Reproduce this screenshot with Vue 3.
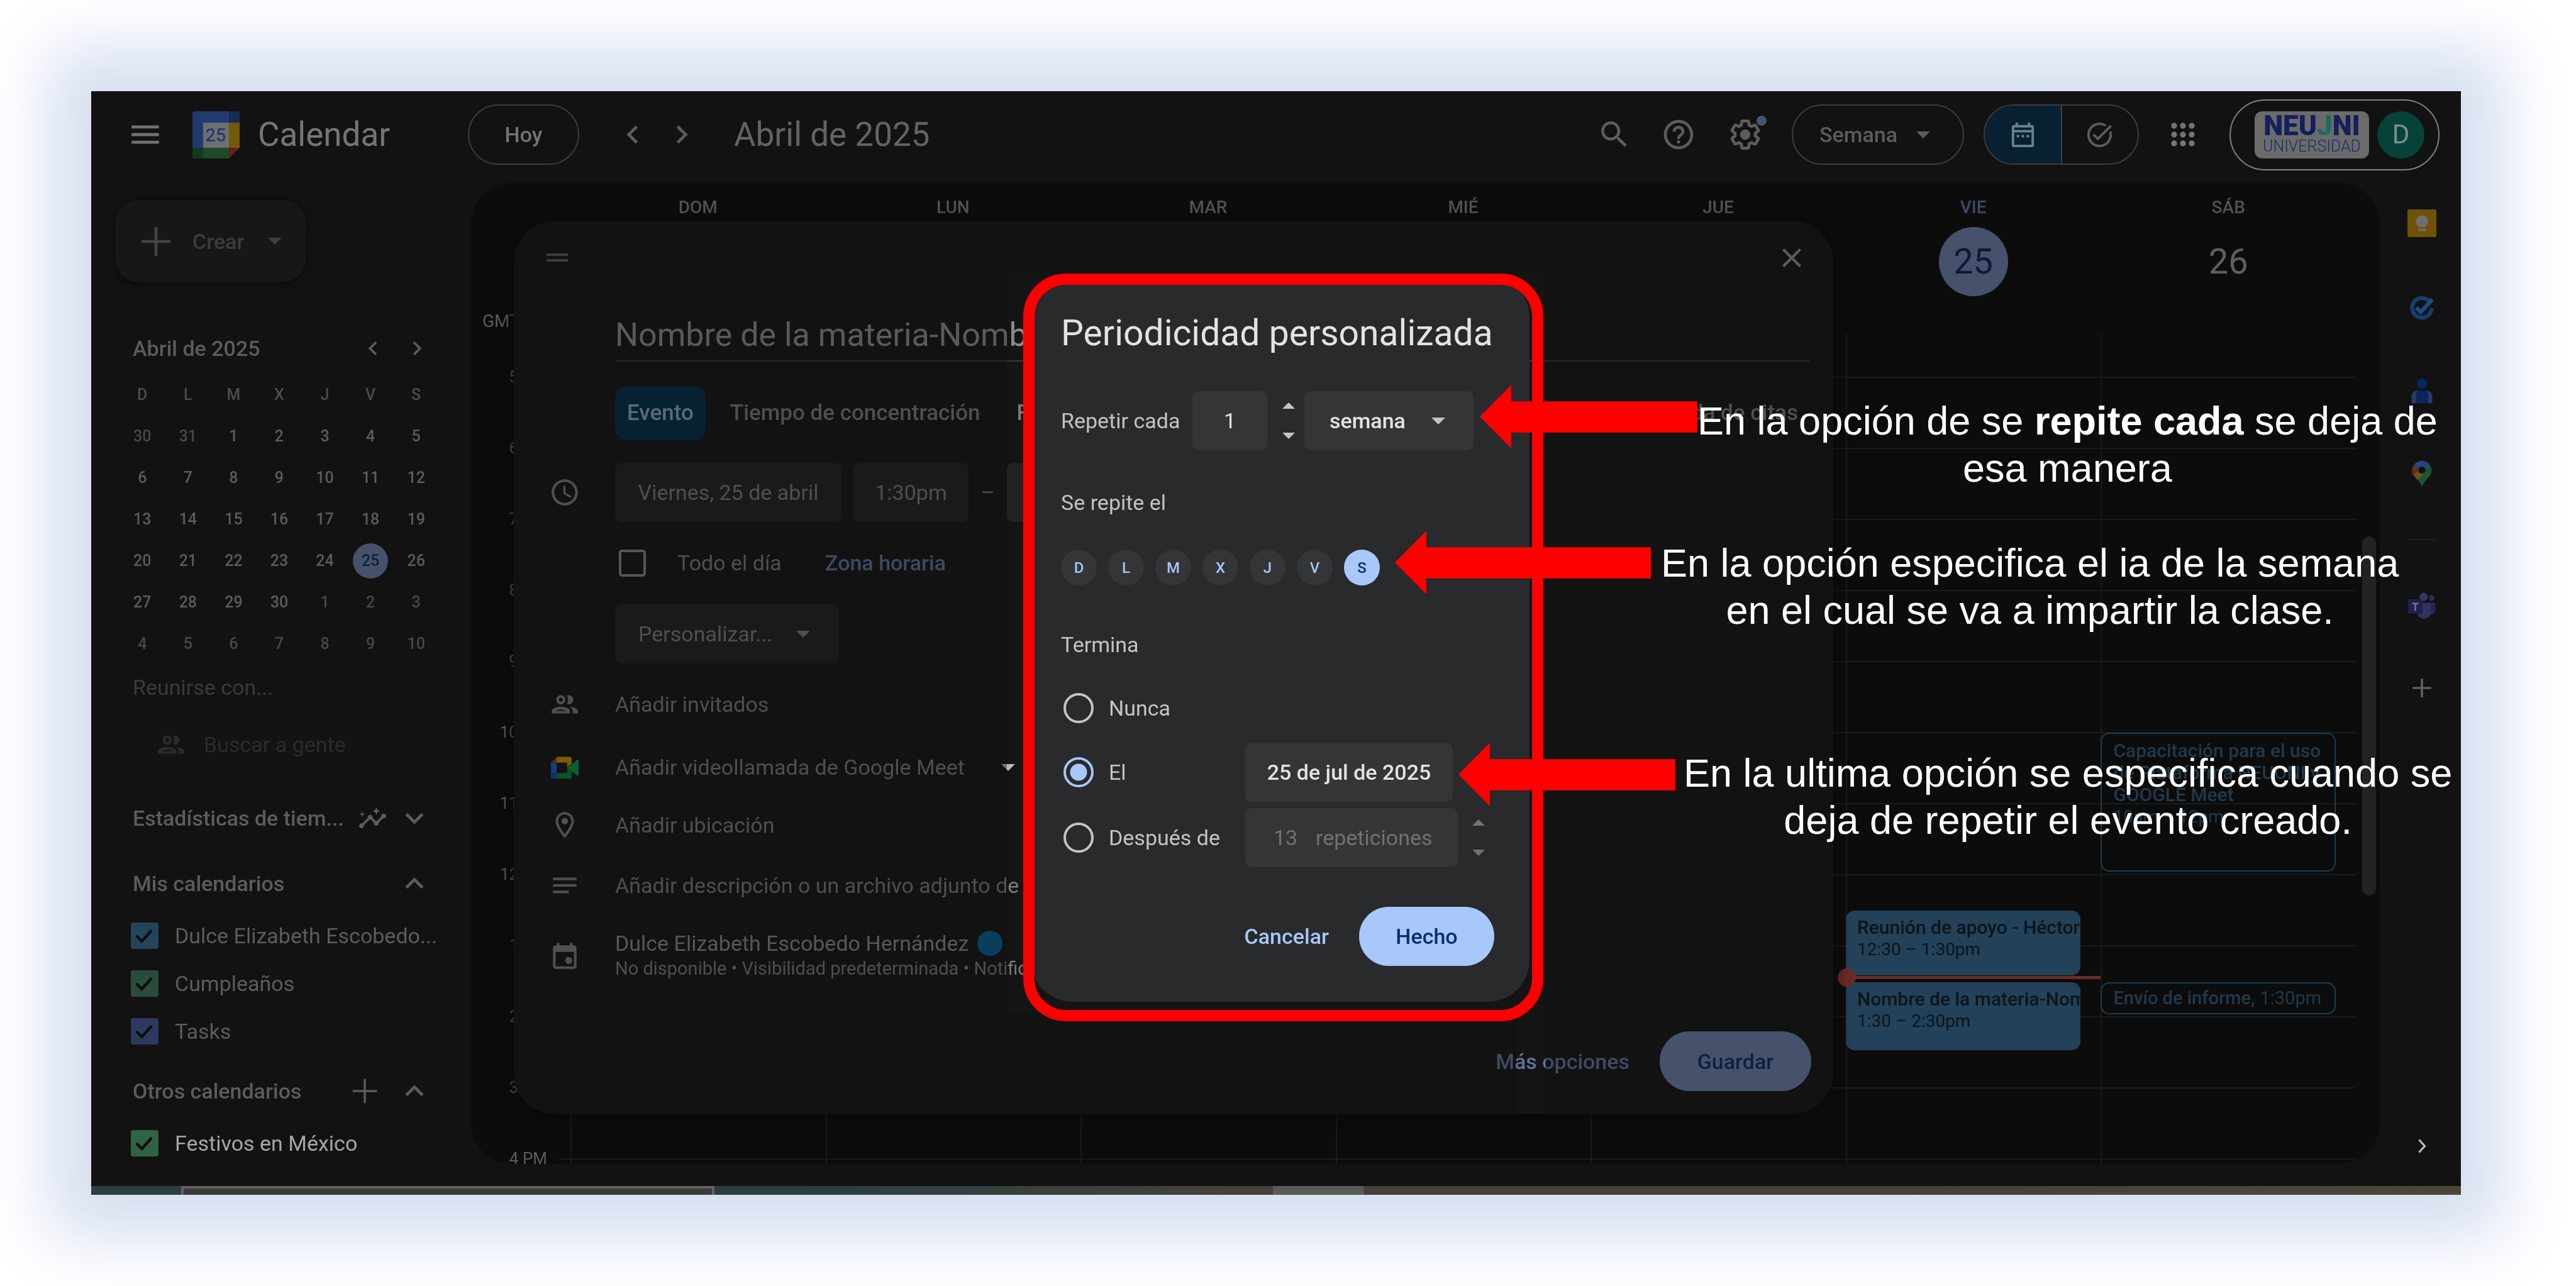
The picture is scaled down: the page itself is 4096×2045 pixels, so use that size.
<script setup>
import { ref } from 'vue'

const weekdays = ['D', 'L', 'M', 'X', 'J', 'V', 'S']
const miniWeeks = [
  [30, 31, 1, 2, 3, 4, 5],
  [6, 7, 8, 9, 10, 11, 12],
  [13, 14, 15, 16, 17, 18, 19],
  [20, 21, 22, 23, 24, 25, 26],
  [27, 28, 29, 30, 1, 2, 3],
  [4, 5, 6, 7, 8, 9, 10],
]
const isOtherMonth = (row, day) => (row === 0 && day > 20) || (row === 4 && day < 10) || row === 5
const isToday = (row, day) => row === 3 && day === 25

const myCalendars = ref([
  { name: 'Dulce Elizabeth Escobedo...', color: '#23455c', on: true },
  { name: 'Cumpleaños', color: '#284d3b', on: true },
  { name: 'Tasks', color: '#2c3a5f', on: true },
])
const otherCalendars = ref([{ name: 'Festivos en México', color: '#2f6343', on: true }])

const hours = ['5 AM', '6 AM', '7 AM', '8 AM', '9 AM', '10 AM', '11 AM', '12 PM', '1 PM', '2 PM', '3 PM', '4 PM']
const days = [
  { name: 'DOM', date: 20 },
  { name: 'LUN', date: 21 },
  { name: 'MAR', date: 22 },
  { name: 'MIÉ', date: 23 },
  { name: 'JUE', date: 24 },
  {
    name: 'VIE',
    date: 25,
    today: true,
    events: [
      { title: ['Reunión de apoyo - Héctor'], time: '12:30 – 1:30pm', top: 917, height: 103 },
      { title: ['Nombre de la materia-Nombre'], time: '1:30 – 2:30pm', top: 1031, height: 108 },
    ],
  },
  {
    name: 'SÁB',
    date: 26,
    events: [
      { title: ['Capacitación para el uso', 'de Plataforma NEUONI y', 'GOOGLE Meet'], time: '10am – 12pm', top: 634, height: 221, outline: true },
      { title: ['Envío de informe,'], time: '1:30pm', top: 1031, height: 51, outline: true, inline: true },
    ],
  },
]

const title = ref('Nombre de la materia-Nombre del docente')
const allDay = ref(false)
const repeatDay = ref('S')
const ends = ref('el')
</script>

<template>
  <div class="page">
    <div class="screen">
      <header class="topbar">
        <div class="brand">
          <button class="icon-btn bright" aria-label="Menú principal">
            <svg viewBox="0 0 24 24"><path d="M3 18h18v-2H3v2zm0-5h18v-2H3v2zm0-7v2h18V6H3z" /></svg>
          </button>
          <svg class="logo" viewBox="0 0 75 75" aria-hidden="true">
            <path fill="#213b70" d="M4 0h54v18H17v40H0V4a4 4 0 0 1 4-4z" />
            <path fill="#142c58" d="M58 0h13a4 4 0 0 1 4 4v14H58z" />
            <path fill="#735909" d="M58 18h17v40H58z" />
            <path fill="#1f4a2a" d="M17 58h41v17H17z" />
            <path fill="#133a1c" d="M0 58h17v17H4a4 4 0 0 1-4-4z" />
            <path fill="#651f1b" d="M58 58h17L58 75z" />
            <path fill="#6f6f6f" d="M17 18h41v40H17z" />
            <text x="37" y="48" text-anchor="middle" font-size="29" font-weight="500" fill="#213b70">25</text>
          </svg>
          <span class="brand-name">Calendar</span>
        </div>
        <button class="pill today-btn">Hoy</button>
        <button class="icon-btn prev" aria-label="Semana anterior">
          <svg viewBox="0 0 24 24"><path d="M15.4 7.4 14 6l-6 6 6 6 1.4-1.4L10.800 12z" /></svg>
        </button>
        <button class="icon-btn next" aria-label="Semana siguiente">
          <svg viewBox="0 0 24 24"><path d="M10 6 8.600 7.400 13.200 12l-4.600 4.600L10 18l6-6z" /></svg>
        </button>
        <h1 class="range">Abril de 2025</h1>
        <div class="tools">
          <button class="icon-btn" aria-label="Buscar">
            <svg viewBox="0 0 24 24"><path d="M15.500 14h-.79l-.28-.27A6.470 6.470 0 0 0 16 9.500 6.500 6.500 0 1 0 9.500 16c1.610 0 3.090-.59 4.230-1.570l.27.28v.79l5 4.990L20.490 19l-4.990-5zm-6 0C7.010 14 5 11.990 5 9.500S7.010 5 9.500 5 14 7.010 14 9.500 11.990 14 9.500 14z" /></svg>
          </button>
          <button class="icon-btn" aria-label="Ayuda">
            <svg viewBox="0 0 24 24"><path d="M11 18h2v-2h-2v2zm1-16C6.480 2 2 6.480 2 12s4.480 10 10 10 10-4.480 10-10S17.520 2 12 2zm0 18c-4.410 0-8-3.590-8-8s3.590-8 8-8 8 3.590 8 8-3.590 8-8 8zm0-14c-2.210 0-4 1.790-4 4h2c0-1.100.9-2 2-2s2 .9 2 2c0 2-3 1.750-3 5h2c0-2.250 3-2.500 3-5 0-2.210-1.790-4-4-4z" /></svg>
          </button>
          <button class="icon-btn gear" aria-label="Configuración">
            <svg viewBox="0 0 24 24"><path d="M13.850 22.250h-3.700c-.74 0-1.360-.54-1.450-1.270l-.27-1.890c-.27-.14-.53-.29-.79-.46l-1.800.72c-.7.26-1.470-.03-1.810-.65L2.200 15.530c-.35-.66-.2-1.440.36-1.880l1.530-1.190c-.01-.15-.02-.3-.02-.46 0-.15.010-.31.020-.46l-1.520-1.190c-.59-.45-.74-1.260-.37-1.880l1.850-3.190c.34-.62 1.110-.9 1.790-.63l1.810.73c.26-.17.52-.32.78-.46l.27-1.910c.09-.7.71-1.250 1.440-1.250h3.700c.74 0 1.360.54 1.450 1.270l.27 1.890c.27.14.53.29.79.46l1.800-.72c.71-.26 1.480.03 1.820.65l1.840 3.180c.36.66.2 1.440-.36 1.880l-1.520 1.190c.01.15.020.3.020.46s-.01.31-.02.46l1.520 1.190c.56.45.72 1.230.37 1.860l-1.860 3.220c-.34.62-1.110.9-1.800.63l-1.800-.72c-.26.17-.52.32-.78.46l-.27 1.910c-.1.680-.72 1.220-1.460 1.220zm-3.230-2h2.760l.37-2.550.53-.22c.44-.18.88-.44 1.340-.78l.45-.34 2.380.96 1.380-2.400-2.030-1.580.07-.56c.03-.26.060-.51.060-.78s-.03-.53-.06-.78l-.07-.56 2.030-1.580-1.390-2.400-2.390.96-.45-.35c-.42-.32-.87-.58-1.330-.77l-.52-.22-.37-2.550h-2.760l-.37 2.550-.53.210c-.44.19-.88.44-1.340.79l-.45.33-2.380-.95-1.390 2.390 2.030 1.580-.07.560a7 7 0 0 0-.06.79c0 .26.020.53.060.78l.07.56-2.030 1.580 1.380 2.400 2.390-.96.45.35c.43.33.86.58 1.330.77l.53.220.38 2.550z" /><circle cx="12" cy="12" r="3.500" /></svg>
            <span class="dot"></span>
          </button>
          <div class="pill view-pill">
            <select aria-label="Vista"><option>Semana</option></select>
            <svg class="caret" viewBox="0 0 10 5"><path d="M0 0h10L5 5z" /></svg>
          </div>
          <div class="pill toggle">
            <button class="on" aria-label="Calendario">
              <svg viewBox="0 0 24 24"><path d="M19 4h-1V2h-2v2H8V2H6v2H5a2 2 0 0 0-2 2v14a2 2 0 0 0 2 2h14a2 2 0 0 0 2-2V6a2 2 0 0 0-2-2zm0 16H5V10h14v10zm0-12H5V6h14v2zM7 12h2v2H7zm4 0h2v2h-2zm4 0h2v2h-2z" /></svg>
            </button>
            <button aria-label="Tareas">
              <svg viewBox="0 0 24 24"><path d="M22 5.180 10.590 16.600l-4.240-4.240 1.410-1.410 2.830 2.830 10-10L22 5.180zM19.790 10.220c.13.570.21 1.170.21 1.780 0 4.420-3.580 8-8 8s-8-3.580-8-8 3.580-8 8-8c1.580 0 3.040.46 4.280 1.250l1.440-1.440A9.900 9.900 0 0 0 12 2C6.480 2 2 6.480 2 12s4.480 10 10 10 10-4.480 10-10c0-1.190-.22-2.330-.6-3.390l-1.610 1.610z" /></svg>
            </button>
          </div>
          <button class="icon-btn apps" aria-label="Aplicaciones de Google">
            <svg viewBox="0 0 24 24"><g><circle v-for="n in 9" :key="n" :cx="6 + ((n - 1) % 3) * 6" :cy="6 + Math.floor((n - 1) / 3) * 6" r="2" /></g></svg>
          </button>
          <div class="account">
            <div class="school">
              <span class="school-name">NEU<i>J</i>NI</span>
              <span class="school-sub">UNIVERSIDAD</span>
            </div>
            <button class="avatar" aria-label="Cuenta">D</button>
          </div>
        </div>
      </header>

      <div class="body">
        <aside class="sidebar">
          <button class="create">
            <svg class="plus" viewBox="0 0 20 20"><path d="M9 0h2v9h9v2h-9v9H9v-9H0V9h9z" /></svg>
            <span>Crear</span>
            <svg class="caret" viewBox="0 0 10 5"><path d="M0 0h10L5 5z" /></svg>
          </button>

          <div class="mini-head">
            <h2>Abril de 2025</h2>
            <button class="icon-btn small" aria-label="Mes anterior">
              <svg viewBox="0 0 24 24"><path d="M15.400 7.400 14 6l-6 6 6 6 1.400-1.400L10.800 12z" /></svg>
            </button>
            <button class="icon-btn small" aria-label="Mes siguiente">
              <svg viewBox="0 0 24 24"><path d="M10 6 8.600 7.400 13.200 12l-4.600 4.600L10 18l6-6z" /></svg>
            </button>
          </div>
          <table class="mini">
            <thead>
              <tr><th v-for="d in weekdays" :key="d">{{ d }}</th></tr>
            </thead>
            <tbody>
              <tr v-for="(week, r) in miniWeeks" :key="r">
                <td v-for="day in week" :key="day" :class="{ other: isOtherMonth(r, day), today: isToday(r, day) }"><span>{{ day }}</span></td>
              </tr>
            </tbody>
          </table>

          <label class="meet-label" for="people">Reunirse con...</label>
          <div class="people">
            <svg viewBox="0 0 24 24"><path d="M9 12c1.930 0 3.500-1.570 3.500-3.500S10.930 5 9 5 5.500 6.570 5.500 8.500 7.070 12 9 12zm0-5c.83 0 1.500.67 1.500 1.500S9.830 10 9 10s-1.500-.67-1.500-1.500S8.170 7 9 7zm.05 10H4.770c.99-.5 2.700-1 4.230-1s3.240.5 4.230 1zM9 13.750c-2.340 0-7 1.170-7 3.500V19h14v-1.750c0-2.330-4.660-3.500-7-3.500zm7.040.06c1.160.84 1.960 1.960 1.960 3.440V19h4v-1.750c0-2.020-3.500-3.170-5.960-3.440zM15 12c1.930 0 3.500-1.570 3.500-3.500S16.930 5 15 5c-.54 0-1.040.13-1.500.35.63.89 1 1.980 1 3.150s-.37 2.260-1 3.150c.46.220.96.35 1.500.35z" /></svg>
            <input id="people" type="text" placeholder="Buscar a gente" />
          </div>

          <div class="section insights">
            <h2>Estadísticas de tiem...</h2>
            <svg class="ico spark" viewBox="0 0 24 24"><path d="M21 8c-1.450 0-2.260 1.440-1.930 2.510l-3.550 3.560c-.3-.09-.74-.09-1.040 0l-2.550-2.550C12.270 10.450 11.460 9 10 9c-1.450 0-2.270 1.440-1.930 2.520l-4.560 4.550C2.440 15.740 1 16.550 1 18c0 1.100.9 2 2 2 1.450 0 2.260-1.440 1.930-2.510l4.550-4.560c.3.09.74.09 1.040 0l2.550 2.550C12.730 16.550 13.540 18 15 18c1.450 0 2.270-1.440 1.930-2.520l3.560-3.550C21.560 12.260 23 11.450 23 10c0-1.100-.9-2-2-2zM15 9l.94-2.070L18 6l-2.060-.93L15 3l-.92 2.070L12 6l2.080.93zM3.500 11 4 9l2-.5L4 8l-.5-2L3 8l-2 .5L3 9z" /></svg>
            <svg class="ico" viewBox="0 0 24 24"><path d="M7.400 8.600 12 13.200l4.600-4.600L18 10l-6 6-6-6z" /></svg>
          </div>

          <div class="section mine">
            <h2>Mis calendarios</h2>
            <svg class="ico" viewBox="0 0 24 24"><path d="m12 8-6 6 1.400 1.400L12 10.800l4.600 4.600L18 14z" /></svg>
          </div>
          <label v-for="c in myCalendars" :key="c.name" class="cal">
            <input v-model="c.on" type="checkbox" :style="{ backgroundColor: c.color }" />
            <span>{{ c.name }}</span>
          </label>

          <div class="section others">
            <h2>Otros calendarios</h2>
            <svg class="ico" viewBox="0 0 24 24"><path d="M11.300 4h1.400v7.300H20v1.400h-7.300V20h-1.400v-7.300H4v-1.400h7.300z" /></svg>
            <svg class="ico" viewBox="0 0 24 24"><path d="m12 8-6 6 1.400 1.400L12 10.800l4.600 4.600L18 14z" /></svg>
          </div>
          <label v-for="c in otherCalendars" :key="c.name" class="cal lit">
            <input v-model="c.on" type="checkbox" :style="{ backgroundColor: c.color }" />
            <span>{{ c.name }}</span>
          </label>
        </aside>

        <main class="calendar">
          <div class="day-heads">
            <span class="gmt">GMT-06</span>
            <div v-for="d in days" :key="d.name" class="day-head" :class="{ today: d.today }">
              <span class="day-name">{{ d.name }}</span>
              <span class="day-num">{{ d.date }}</span>
            </div>
          </div>
          <div class="week">
            <div class="hours"><span v-for="h in hours" :key="h">{{ h }}</span></div>
            <div class="cols">
              <div v-for="d in days" :key="d.name" class="col">
                <div v-for="e in d.events" :key="e.top" class="event" :class="{ outline: e.outline, inline: e.inline }" :style="{ top: e.top + 'px', height: e.height + 'px' }">
                  <strong v-for="line in e.title" :key="line">{{ line }}</strong>
                  <span>{{ e.time }}</span>
                </div>
                <div v-if="d.today" class="now"></div>
              </div>
            </div>
          </div>
          <div class="scrollbar"></div>
        </main>

        <nav class="rail">
          <svg class="keep" viewBox="0 0 48 48"><rect width="48" height="46" rx="3" fill="#6e5206" /><circle cx="24" cy="20" r="10" fill="#6f6f6f" /><path fill="#6f6f6f" d="M18 32h12v4H18zM18 24h12v5H18z" /></svg>
          <svg viewBox="0 0 48 48"><path fill="none" stroke="#163d70" stroke-width="7" d="M37 13.500A17 17 0 1 0 41 25" /><path fill="none" stroke="#1c4a86" stroke-width="7" d="m14 24 8 8L42 10" /></svg>
          <svg viewBox="0 0 48 48"><circle cx="24" cy="12" r="9" fill="#08275c" /><path fill="#2b3b62" d="M6 46V36c0-8 4-12 10-12h16c6 0 10 4 10 12v10z" /><path fill="#08275c" d="M14 46V30c0-4 3-6 6-6h10c3 0 5 2 5 6v16z" /></svg>
          <svg viewBox="0 0 48 48"><path fill="#1e5430" d="M41 18c0 12-12 16-17 29-2-6-5-10-9-14l22-24c3 3 4 6 4 9z" /><path fill="#6e5410" d="M9 26 20 14l9 9-13 12c-3-3-5-6-7-9z" /><path fill="#702a24" d="M10 9l10 8-11 11c-4-7-2-15 1-19z" /><path fill="#26457c" d="M10 9c7-9 20-10 28 0L27 21l-9-4z" /><circle cx="24" cy="18" r="6" fill="#101010" /></svg>
          <hr />
          <svg class="teams" viewBox="0 0 48 48"><circle cx="27" cy="9" r="7" fill="#343665" /><circle cx="41" cy="11" r="5" fill="#2a2c58" /><path fill="#25264f" d="M35 19h12v13c0 5-4 8-9 8z" /><path fill="#30325f" d="M16 19h23v16c0 7-5 12-11.500 12S16 42 16 35z" /><rect y="13" width="25" height="25" rx="2" fill="#1f2150" /><path fill="#70708a" d="M7 19h11v3h-4v11h-3V22H7z" /></svg>
          <svg class="add" viewBox="0 0 28 28"><path fill="#666" d="M12.500 0h3v12.500H28v3H15.500V28h-3V15.500H0v-3h12.500z" /></svg>
          <svg class="collapse" viewBox="0 0 13 23"><path fill="none" stroke="#c4c4c4" stroke-width="3" d="m1.500 1.500 9 10-9 10" /></svg>
        </nav>
      </div>

      <div class="taskbar"><span class="task-window"></span><span class="task-mid"></span></div>

      <section class="editor">
        <div class="editor-bar">
          <svg class="grip" viewBox="0 0 34 13"><path d="M0 0h34v4H0zm0 9h34v4H0z" /></svg>
          <button class="close" aria-label="Cerrar">
            <svg viewBox="0 0 14 14"><path d="M14 1.400 12.600 0 7 5.600 1.400 0 0 1.400 5.600 7 0 12.600 1.400 14 7 8.400l5.600 5.600 1.400-1.400L8.400 7z" /></svg>
          </button>
        </div>
        <input v-model="title" class="title" type="text" aria-label="Título" />
        <div class="tabs">
          <button class="on">Evento</button>
          <button>Tiempo de concentración</button>
          <button>Fuera de la oficina</button>
          <button>Tarea</button>
          <button class="last">Agenda de citas</button>
        </div>
        <div class="row time">
          <svg viewBox="0 0 24 24"><path d="M12 2C6.500 2 2 6.500 2 12s4.500 10 10 10 10-4.500 10-10S17.500 2 12 2zm0 18c-4.400 0-8-3.600-8-8s3.600-8 8-8 8 3.600 8 8-3.600 8-8 8zm.5-13H11v6l5.200 3.200.8-1.300-4.500-2.700z" /></svg>
          <button class="field date">Viernes, 25 de abril</button>
          <button class="field hour">1:30pm</button>
          <span class="dash">–</span>
          <button class="field hour">2:30pm</button>
        </div>
        <div class="allday">
          <label><input v-model="allDay" type="checkbox" /><span>Todo el día</span></label>
          <a href="#">Zona horaria</a>
        </div>
        <div class="field custom">
          <select aria-label="Periodicidad"><option>Personalizar...</option></select>
          <svg class="caret" viewBox="0 0 10 5"><path d="M0 0h10L5 5z" /></svg>
        </div>
        <div class="row">
          <svg viewBox="0 0 24 24"><path d="M9 12c1.930 0 3.500-1.570 3.500-3.500S10.930 5 9 5 5.500 6.570 5.500 8.500 7.070 12 9 12zm0-5c.83 0 1.500.67 1.500 1.500S9.830 10 9 10s-1.500-.67-1.500-1.500S8.170 7 9 7zm.05 10H4.770c.99-.5 2.700-1 4.230-1s3.240.5 4.230 1zM9 13.750c-2.340 0-7 1.170-7 3.500V19h14v-1.750c0-2.330-4.660-3.500-7-3.500zm7.040.06c1.160.84 1.960 1.960 1.960 3.440V19h4v-1.750c0-2.020-3.500-3.170-5.960-3.440zM15 12c1.930 0 3.500-1.570 3.500-3.500S16.930 5 15 5c-.54 0-1.040.13-1.500.35.63.89 1 1.980 1 3.150s-.37 2.260-1 3.150c.46.220.96.35 1.500.35z" /></svg>
          <span>Añadir invitados</span>
        </div>
        <div class="row meet">
          <svg viewBox="0 0 24 24"><path fill="#123e80" d="M0 8h5v9H0z" /><path fill="#0f356f" d="M0 17h5v5H2a2 2 0 0 1-2-2z" /><path fill="#6b1f18" d="M0 8l5-5v5z" /><path fill="#7a5c02" d="M5 3h11a2 2 0 0 1 2 2v4l-4 3V8H5z" /><path fill="#07532a" d="M5 17h9v-5l4 4v4a2 2 0 0 1-2 2H5z" /><path fill="#08602f" d="m14 12.500 9-7c.5-.4 1-.1 1 .5v13c0 .6-.5.9-1 .5z" /></svg>
          <span>Añadir videollamada de Google Meet</span>
          <svg class="caret" viewBox="0 0 10 5"><path d="M0 0h10L5 5z" /></svg>
        </div>
        <div class="row place">
          <svg viewBox="0 0 24 24"><path d="M12 2C8.130 2 5 5.130 5 9c0 5.250 7 13 7 13s7-7.750 7-13c0-3.870-3.130-7-7-7zM7 9c0-2.760 2.240-5 5-5s5 2.240 5 5c0 2.880-2.880 7.190-5 9.880C9.920 16.210 7 11.850 7 9z" /><circle cx="12" cy="9" r="2.500" /></svg>
          <span>Añadir ubicación</span>
        </div>
        <div class="row desc">
          <svg viewBox="0 0 24 24"><path d="M3 18h12v-2H3v2zM3 6v2h18V6H3zm0 7h18v-2H3v2z" /></svg>
          <span>Añadir descripción o un archivo adjunto de Google Drive</span>
        </div>
        <div class="row owner">
          <svg viewBox="0 0 24 24"><path d="M19 4h-1V2h-2v2H8V2H6v2H5a2 2 0 0 0-2 2v14a2 2 0 0 0 2 2h14a2 2 0 0 0 2-2V6a2 2 0 0 0-2-2zm0 16H5V9h14v11z" /><circle cx="15" cy="15.500" r="2.700" /></svg>
          <div>
            <p class="who">Dulce Elizabeth Escobedo Hernández <i></i></p>
            <p class="meta">No disponible • Visibilidad predeterminada • Notificar 10 minutos antes</p>
          </div>
        </div>
        <div class="editor-foot">
          <button class="more">Más opciones</button>
          <button class="save">Guardar</button>
        </div>
      </section>

      <div class="lift main-lift"></div>
      <div class="lift foot-lift"></div>

      <section class="recur" role="dialog" aria-labelledby="recur-title">
        <h2 id="recur-title">Periodicidad personalizada</h2>
        <div class="every">
          <label for="every">Repetir cada</label>
          <input id="every" class="box" type="text" value="1" />
          <div class="spin">
            <button aria-label="Aumentar"><svg viewBox="0 0 10 5"><path d="M0 5h10L5 0z" /></svg></button>
            <button aria-label="Reducir"><svg viewBox="0 0 10 5"><path d="M0 0h10L5 5z" /></svg></button>
          </div>
          <div class="box unit">
            <select aria-label="Unidad"><option>semana</option></select>
            <svg class="caret" viewBox="0 0 10 5"><path d="M0 0h10L5 5z" /></svg>
          </div>
        </div>
        <p class="sub on">Se repite el</p>
        <div class="days">
          <button v-for="d in weekdays" :key="d" :class="{ on: d === repeatDay }" @click="repeatDay = d">{{ d }}</button>
        </div>
        <p class="sub end">Termina</p>
        <div class="opt never">
          <label><input v-model="ends" type="radio" name="ends" value="nunca" /><span>Nunca</span></label>
        </div>
        <div class="opt">
          <label><input v-model="ends" type="radio" name="ends" value="el" /><span>El</span></label>
          <button class="box until">25 de jul de 2025</button>
        </div>
        <div class="opt">
          <label><input v-model="ends" type="radio" name="ends" value="despues" /><span>Después de</span></label>
          <div class="box count"><input type="text" value="13" disabled aria-label="Número de repeticiones" /><span>repeticiones</span></div>
          <div class="spin off">
            <button aria-label="Aumentar"><svg viewBox="0 0 10 5"><path d="M0 5h10L5 0z" /></svg></button>
            <button aria-label="Reducir"><svg viewBox="0 0 10 5"><path d="M0 0h10L5 5z" /></svg></button>
          </div>
        </div>
        <div class="actions">
          <button class="cancel">Cancelar</button>
          <button class="done">Hecho</button>
        </div>
      </section>

      <div class="frame"></div>
      <div class="arrow a1"></div>
      <div class="arrow a2"></div>
      <div class="arrow a3"></div>
      <p class="note n1">En la opción de se <b>repite cada</b> se deja de<br />esa manera</p>
      <p class="note n2">En la opción especifica el ia de la semana<br />en el cual se va a impartir la clase.</p>
      <p class="note n3">En la ultima opción se especifica cuando se<br />deja de repetir el evento creado.</p>
    </div>
  </div>
</template>

<style>
body {
  margin: 0;
  background: #fff;
}
</style>

<style scoped>
* {
  box-sizing: border-box;
}
.page {
  display: flex;
  min-height: 100vh;
  padding: 145px 183px 145px 145px;
  overflow: hidden;
  font-family: Roboto, "Noto Sans", sans-serif;
  font-size: 34px;
  line-height: 40px;
  color: #5c5c5c;
}
.screen {
  position: relative;
  flex: 1;
  display: flex;
  flex-direction: column;
  background: #111211;
  box-shadow: 0 0 100px 70px #d6dff1;
}
button,
input,
select {
  font: inherit;
  color: inherit;
  background: none;
  border: 0;
  padding: 0;
  margin: 0;
  outline: 0;
  appearance: none;
}
h1,
h2,
p {
  margin: 0;
  font-size: inherit;
  font-weight: 400;
}
a {
  text-decoration: none;
}
svg {
  display: block;
  flex: none;
  fill: currentColor;
}
.caret {
  width: 22px;
  height: 11px;
}

/* top bar */
.topbar {
  display: flex;
  align-items: center;
  height: 146px;
  padding: 0 34px 8px 0;
  flex: none;
}
.brand {
  display: flex;
  align-items: center;
  width: 599px;
  padding-left: 57px;
}
.icon-btn {
  display: flex;
  width: 58px;
  height: 58px;
  position: relative;
}
.icon-btn svg {
  width: 100%;
  height: 100%;
}
.bright {
  color: #707070;
}
.logo {
  width: 75px;
  height: 75px;
  margin: 0 29px 0 46px;
}
.brand-name {
  font-size: 53px;
  line-height: 60px;
  color: #757575;
}
.pill {
  height: 96px;
  border: 2px solid #3d3d3d;
  border-radius: 48px;
}
.today-btn {
  width: 177px;
  font-weight: 500;
  color: #757575;
}
.prev {
  margin-left: 56px;
}
.next {
  margin-left: 20px;
}
.range {
  margin-left: 54px;
  font-size: 53px;
  line-height: 60px;
  color: #636363;
}
.tools {
  display: flex;
  align-items: center;
  margin-left: auto;
}
.tools > .icon-btn {
  width: 56px;
  height: 56px;
  margin-right: 46px;
}
.tools > .gear {
  margin-left: 4px;
}
.dot {
  position: absolute;
  right: -6px;
  top: -2px;
  width: 16px;
  height: 16px;
  border-radius: 50%;
  background: #46556f;
}
.view-pill {
  display: flex;
  align-items: center;
  justify-content: space-between;
  width: 274px;
  padding: 0 52px 0 42px;
  margin-right: 31px;
  font-weight: 500;
}
.toggle {
  display: flex;
  width: 247px;
  overflow: hidden;
  margin-right: 42px;
}
.toggle button {
  flex: 1;
  display: grid;
  place-items: center;
}
.toggle button + button {
  border-left: 2px solid #3d3d3d;
}
.toggle .on {
  background: #072133;
  color: #6d7f8d;
}
.toggle svg {
  width: 47px;
  height: 47px;
}
.tools > .apps {
  color: #757575;
}
.account {
  display: flex;
  align-items: center;
  width: 334px;
  height: 113px;
  padding: 0 22px 0 38px;
  justify-content: space-between;
  border: 2px solid #808080;
  border-radius: 57px;
}
.school {
  width: 182px;
  height: 75px;
  border-radius: 12px;
  background: #6b6b6b;
  text-align: center;
  display: flex;
  flex-direction: column;
  justify-content: center;
}
.school-name {
  font-size: 44px;
  line-height: 38px;
  font-weight: 900;
  color: #13205a;
}
.school-name i {
  font-style: normal;
  color: #1c6b60;
}
.school-sub {
  font-size: 25px;
  line-height: 28px;
  font-weight: 300;
  color: #1b2c68;
}
.avatar {
  width: 75px;
  height: 75px;
  border-radius: 50%;
  background: #06423a;
  font-size: 42px;
  color: #7d8f8c;
}

/* layout */
.body {
  display: flex;
  flex: 1;
}
.sidebar {
  width: 604px;
  flex: none;
  padding-right: 61px;
}
.create {
  display: flex;
  align-items: center;
  width: 304px;
  height: 131px;
  margin: 27px 0 0 38px;
  padding: 0 39px 0 42px;
  border-radius: 38px;
  background: #171717;
  font-weight: 500;
  color: #3d3d3d;
  box-shadow: 0 2px 8px #0a0a0a;
}
.create .plus {
  width: 46px;
  height: 46px;
  margin-right: 35px;
  color: #454545;
}
.create .caret {
  margin-left: auto;
}
.mini-head {
  display: flex;
  align-items: center;
  height: 60px;
  margin: 75px 0 11px 66px;
  gap: 26px;
  padding-right: 3px;
}
.mini-head h2 {
  flex: 1;
  font-weight: 500;
}
.icon-btn.small {
  width: 44px;
  height: 44px;
}
.mini {
  width: 508px;
  margin-left: 45px;
  table-layout: fixed;
  border-collapse: collapse;
  font-size: 25px;
  line-height: 30px;
  font-weight: 500;
  text-align: center;
}
.mini th,
.mini td {
  height: 66px;
  padding: 0;
}
.mini th {
  font-weight: 500;
  color: #4c4c4c;
}
.mini .other {
  color: #484848;
}
.mini .today span {
  display: block;
  width: 56px;
  margin: 0 auto;
  line-height: 56px;
  border-radius: 50%;
  background: #46526b;
  color: #0e1e3b;
}
.meet-label {
  display: block;
  margin: 16px 0 24px 66px;
  color: #3b3b3b;
}
.people {
  display: flex;
  align-items: center;
  width: 472px;
  height: 93px;
  margin-left: 66px;
  padding: 0 36px;
  border-radius: 10px;
  background: #131313;
  color: #2b2b2b;
}
.people svg {
  width: 50px;
  height: 50px;
  margin-right: 27px;
}
.people input {
  flex: 1;
  min-width: 0;
}
.people input::placeholder {
  color: #2b2b2b;
  opacity: 1;
}
.section {
  display: flex;
  align-items: center;
  height: 60px;
  padding-left: 66px;
  margin-top: 44px;
}
.section h2 {
  flex: 1;
  font-weight: 500;
  white-space: nowrap;
}
.ico {
  width: 58px;
  height: 58px;
}
.insights {
  margin-top: 41px;
}
.spark {
  width: 47px;
  height: 47px;
  margin-right: 14px;
}
.others {
  margin-top: 27px;
}
.others .ico + .ico {
  margin-left: 21px;
}
.mine,
.others {
  margin-bottom: 15px;
}
.cal {
  display: flex;
  align-items: center;
  height: 76px;
  padding-left: 63px;
  white-space: nowrap;
}
.cal input {
  flex: none;
  width: 44px;
  height: 42px;
  margin-right: 26px;
  border-radius: 4px;
}
.cal input:checked {
  background-image: url("data:image/svg+xml,%3Csvg xmlns='http://www.w3.org/2000/svg' viewBox='0 0 24 24'%3E%3Cpath fill='none' stroke='%230b0d0e' stroke-width='2.600' d='m5 12 5 5L19 7'/%3E%3C/svg%3E");
}
.lit {
  color: #a6a6a6;
}

/* week grid */
.calendar {
  position: relative;
  flex: 1;
  display: flex;
  flex-direction: column;
  margin-bottom: 35px;
  border-radius: 66px;
  background: #0c0c0d;
  overflow: hidden;
}
.day-heads {
  display: grid;
  grid-template-columns: 158px repeat(7, 1fr);
  height: 240px;
  padding-right: 38px;
  flex: none;
}
.gmt {
  align-self: end;
  padding-left: 18px;
  font-size: 28px;
}
.day-head {
  display: flex;
  flex-direction: column;
  align-items: center;
  padding-top: 19px;
}
.day-name {
  font-size: 28px;
  font-weight: 500;
  color: #525252;
}
.day-num {
  width: 110px;
  margin-top: 11px;
  font-size: 56px;
  line-height: 110px;
  text-align: center;
  border-radius: 50%;
  color: #5f5f5f;
}
.today .day-name {
  color: #3f4b62;
}
.today .day-num {
  background: #46526b;
  color: #0b1a37;
}
/* scroll viewport: takes the room that is left, not the height of all its hours */
.week {
  display: flex;
  flex: 1 1 1px;
  min-height: 0;
  overflow: hidden;
  padding-right: 38px;
}
.hours {
  width: 140px;
  padding: 12px 19px 0 0;
  font-size: 26px;
  text-align: right;
  flex: none;
}
.hours span {
  display: block;
  height: 113px;
  line-height: 113px;
}
.cols {
  flex: 1;
  display: flex;
  padding-left: 18px;
  background: linear-gradient(to bottom, transparent 111px, #1b1b1c 111px) 0 -43px / 100% 113px;
}
.col {
  position: relative;
  flex: 1;
  border-left: 2px solid #1b1b1c;
}
.event {
  position: absolute;
  left: -2px;
  width: calc(100% - 30px);
  padding: 9px 0 0 18px;
  border-radius: 14px;
  background: #234158;
  color: #0c151c;
  font-size: 28px;
  line-height: 35px;
  white-space: nowrap;
  overflow: hidden;
}
.event strong,
.event span {
  display: block;
  font-weight: 400;
}
.event strong {
  font-size: 30px;
  font-weight: 500;
}
.event.outline {
  background: none;
  border: 2px solid #1f3b4e;
  color: #21394a;
}
.event.inline {
  display: flex;
  gap: 8px;
  padding-top: 6px;
}
.event.inline strong,
.event.inline span {
  font-size: 29px;
}
.now {
  position: absolute;
  top: 1021px;
  left: 0;
  right: 0;
  height: 5px;
  background: #6a2b28;
}
.now::before {
  content: "";
  position: absolute;
  left: -15px;
  top: -12px;
  width: 29px;
  height: 29px;
  border-radius: 50%;
  background: #6a2b28;
}
.scrollbar {
  position: absolute;
  right: 6px;
  top: 562px;
  width: 22px;
  height: 571px;
  border-radius: 11px;
  background: #222;
}

/* side rail */
.rail {
  display: flex;
  flex-direction: column;
  align-items: center;
  width: 129px;
  padding: 42px 0 52px 5px;
  flex: none;
}
.rail svg {
  width: 44px;
  height: 44px;
  margin-bottom: 88px;
}
.rail .keep {
  width: 48px;
  height: 46px;
}
.rail hr {
  width: 47px;
  height: 2px;
  margin: -6px 0 82px;
  border: 0;
  background: #1f1f1f;
}
.rail .teams {
  margin-bottom: 94px;
}
.rail .add {
  width: 30px;
  height: 30px;
  margin: 0;
}
.rail .collapse {
  width: 13px;
  height: 23px;
  margin: auto 0 0;
}
.taskbar {
  display: flex;
  height: 14px;
  flex: none;
  padding-left: 143px;
  background: linear-gradient(90deg, #2b3f40 0 30%, #45413a 48%, #45413a 75%, #4b4738);
}
.task-window {
  width: 25%;
  max-width: 848px;
  background: #3a3a3a;
  border: 4px solid #626262;
  border-bottom: 0;
}
.task-mid {
  width: 144px;
  margin-left: 888px;
  background: #5b5a58;
}

/* event editor */
.editor {
  position: absolute;
  left: 672px;
  right: 998px;
  top: 206px;
  display: flex;
  flex-direction: column;
  padding-bottom: 37px;
  border-radius: 66px;
  background: #121212;
  box-shadow: 0 4px 24px #090909;
  white-space: nowrap;
  color: #4f4f4f;
}
.editor-bar {
  display: flex;
  justify-content: space-between;
  align-items: center;
  height: 117px;
  padding: 0 51px 0 52px;
}
.grip {
  width: 34px;
  height: 13px;
  color: #3c3c3c;
}
.close svg {
  width: 30px;
  height: 30px;
  color: #5c5c5c;
}
.title {
  margin: 23px 37px 0 161px;
  height: 84px;
  border-bottom: 2px solid #272727;
  font-size: 52px;
  line-height: 60px;
  color: #5a5a5a;
}
.tabs {
  display: flex;
  gap: 20px;
  margin: 39px 37px 0 161px;
}
.tabs button {
  height: 86px;
  padding: 0 19px;
  border-radius: 19px;
  font-size: 35px;
  font-weight: 500;
}
.tabs .on {
  background: #062132;
  color: #5a6b77;
}
.tabs .last {
  margin-left: auto;
}
.row {
  display: flex;
  align-items: center;
  height: 96px;
  padding-left: 56px;
}
.row > svg:first-child {
  width: 50px;
  height: 50px;
  margin-right: 55px;
}
.field {
  height: 94px;
  border-radius: 10px;
  background: #1a1a1b;
}
.time {
  margin-top: 35px;
}
.date {
  width: 360px;
  margin-right: 19px;
}
.hour {
  width: 183px;
}
.dash {
  width: 61px;
  text-align: center;
}
.allday {
  display: flex;
  align-items: center;
  height: 60px;
  margin: 34px 0 36px 167px;
}
.allday label {
  display: flex;
  align-items: center;
  width: 328px;
}
.allday input {
  width: 43px;
  height: 43px;
  margin-right: 50px;
  border: 4px solid #565656;
  border-radius: 5px;
}
.allday a {
  font-weight: 500;
  color: #3d4a62;
}
.custom {
  display: flex;
  align-items: center;
  justify-content: space-between;
  width: 356px;
  margin: 0 0 17px 161px;
  padding: 0 46px 0 37px;
}
.meet {
  height: 104px;
}
.meet > svg:first-child {
  width: 44px;
  height: 44px;
  margin: 0 58px 0 3px;
}
.meet .caret {
  margin-left: 58px;
}
.row .caret {
  color: #747474;
}
.place {
  height: 80px;
}
.desc {
  height: 112px;
}
.owner {
  height: 112px;
}
.who {
  display: flex;
  align-items: center;
  color: #585858;
}
.who i {
  width: 40px;
  height: 40px;
  margin-left: 14px;
  border-radius: 50%;
  background: #073f5c;
}
.meta {
  font-size: 29px;
}
.editor-foot {
  display: flex;
  justify-content: flex-end;
  align-items: center;
  gap: 48px;
  margin-top: 64px;
  padding-right: 35px;
  font-weight: 500;
}
.more {
  color: #3f4b62;
}
.save {
  width: 241px;
  height: 95px;
  border-radius: 48px;
  background: #46526b;
  color: #0e203f;
}

/* lighter patches around the open dialog */
.lift {
  position: absolute;
  backdrop-filter: brightness(1.56) contrast(1.08);
}
.main-lift {
  left: 1456px;
  top: 290px;
  width: 856px;
  height: 1176px;
}
.foot-lift {
  left: 2266px;
  top: 1466px;
  width: 46px;
  height: 163px;
}

/* recurrence dialog */
.recur {
  position: absolute;
  left: 1494px;
  top: 293px;
  width: 793px;
  padding: 62px 56px 57px 48px;
  border-radius: 66px;
  background: #282a2c;
  color: #c4c4c4;
  white-space: nowrap;
}
.recur h2 {
  font-size: 57px;
  line-height: 60px;
  color: #e3e3e3;
}
.box {
  height: 94px;
  border-radius: 10px;
  background: #333537;
  color: #e3e3e3;
}
.every {
  display: flex;
  align-items: center;
  margin-top: 62px;
}
.every label {
  width: 209px;
}
.every input {
  width: 119px;
  text-align: center;
}
.spin {
  display: flex;
  flex-direction: column;
  gap: 38px;
  width: 59px;
  padding-left: 9px;
  align-items: center;
  flex: none;
}
.spin svg {
  width: 20px;
  height: 10px;
}
.spin button {
  display: block;
}
.unit {
  display: flex;
  align-items: center;
  justify-content: space-between;
  width: 269px;
  padding: 0 45px 0 40px;
  font-weight: 500;
}
.unit .caret {
  color: #c4c4c4;
}
.sub.on {
  margin-top: 63px;
}
.days {
  display: flex;
  gap: 18px;
  margin: 55px 0 74px;
}
.days button {
  width: 57px;
  height: 57px;
  border-radius: 50%;
  background: #333537;
  color: #a8c7fa;
  font-size: 24px;
  font-weight: 500;
}
.days .on {
  background: #a8c7fa;
  color: #062e6f;
}
.opt {
  display: flex;
  align-items: center;
  height: 94px;
  margin-bottom: 10px;
}
.never {
  margin-top: 34px;
  margin-bottom: 8px;
}
.opt label {
  display: flex;
  align-items: center;
  width: 293px;
  flex: none;
}
.opt label input {
  width: 48px;
  height: 48px;
  margin: 0 24px 0 4px;
  border: 4px solid #c4c4c4;
  border-radius: 50%;
}
.opt label input:checked {
  border-color: #a8c7fa;
  background: radial-gradient(circle, #a8c7fa 13px, transparent 14px);
}
.until {
  width: 330px;
  font-weight: 500;
}
.count {
  display: flex;
  align-items: center;
  width: 338px;
  padding-left: 45px;
  flex: none;
  color: #707274;
}
.count input {
  width: 67px;
}
.off {
  color: #707274;
  width: 66px;
  padding-left: 0;
}
.actions {
  display: flex;
  align-items: center;
  justify-content: flex-end;
  gap: 48px;
  margin-top: 63px;
  font-weight: 500;
}
.cancel {
  color: #a8c7fa;
}
.done {
  width: 215px;
  height: 94px;
  border-radius: 47px;
  background: #a8c7fa;
  color: #062e6f;
}

/* annotations */
.frame {
  position: absolute;
  left: 1482px;
  top: 290px;
  width: 827px;
  height: 1189px;
  border: 18px solid #f00;
  border-radius: 68px;
}
.arrow {
  position: absolute;
  height: 101px;
  background: #f00;
  clip-path: polygon(0 50%, 50px 0, 50px 26%, 100% 26%, 100% 75%, 50px 75%, 50px 100%);
}
.a1 {
  left: 2208px;
  top: 467px;
  width: 346px;
}
.a2 {
  left: 2073px;
  top: 699px;
  width: 407px;
}
.a3 {
  left: 2174px;
  top: 1036px;
  width: 345px;
}
.note {
  position: absolute;
  font: 63px/75px "Liberation Sans", Arial, sans-serif;
  color: #fff;
  text-align: center;
  white-space: nowrap;
}
.n1 {
  left: 2554px;
  top: 487px;
}
.n2 {
  left: 2496px;
  top: 713px;
}
.n3 {
  left: 2532px;
  top: 1047px;
}
</style>
